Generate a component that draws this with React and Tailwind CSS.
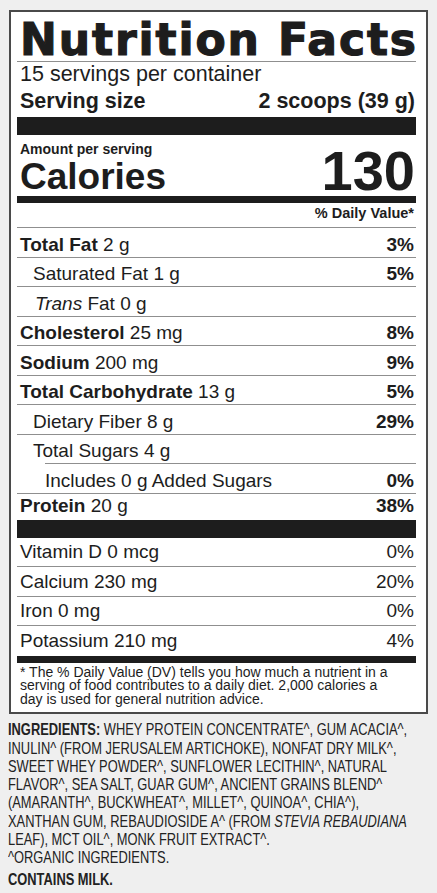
import React from 'react';

function Row({ children, dv, pad = 'pl-[3px]', line = true, align = 'items-end pb-[2px]', dvBold = true, h = 'h-[29.5px]' }) {
  return (
    <div
      className={`flex justify-between ${h} leading-[20px] text-[19px] ${align} ${pad} pr-[2px] ${
        line ? 'border-b border-[#8f8f8f]' : ''
      }`}
    >
      <span className="whitespace-nowrap">{children}</span>
      {dv && <span className={dvBold ? 'font-bold' : ''}>{dv}</span>}
    </div>
  );
}

function App() {
  const ingredients = [
    <>
      <b>INGREDIENTS:</b> WHEY PROTEIN CONCENTRATE^, GUM ACACIA^,
    </>,
    'INULIN^ (FROM JERUSALEM ARTICHOKE), NONFAT DRY MILK^,',
    'SWEET WHEY POWDER^, SUNFLOWER LECITHIN^, NATURAL',
    'FLAVOR^, SEA SALT, GUAR GUM^, ANCIENT GRAINS BLEND^',
    '(AMARANTH^, BUCKWHEAT^, MILLET^, QUINOA^, CHIA^),',
    <>
      XANTHAN GUM, REBAUDIOSIDE A^ (FROM <i>STEVIA REBAUDIANA</i>
    </>,
    'LEAF), MCT OIL^, MONK FRUIT EXTRACT^.',
    '^ORGANIC INGREDIENTS.',
  ];

  return (
    <div className="w-[437px] h-[893px] bg-[#efefef] pt-[10px] text-[#1d1d1d] font-['Liberation_Sans',Arial,sans-serif] overflow-hidden">
      {/* label box */}
      <div className="ml-[9px] w-[419px] border-2 border-[#4a4a4a] bg-white pl-[6px] pr-[10px]">
        <h1 className="h-[50px] border-b border-[#8f8f8f] pl-[3px] pt-[6px] font-['DejaVu_Sans',sans-serif] font-bold text-[44px] leading-[44px] tracking-[1.9px] whitespace-nowrap [-webkit-text-stroke:1.2px_#1d1d1d]">
          Nutrition Facts
        </h1>
        <div className="h-[24px] leading-[24px] text-[21.5px] pl-[3px]">15 servings per container</div>
        <div className="h-[31px] pt-[3px] leading-[24px] text-[21.5px] font-bold flex justify-between pl-[3px] pr-[1px]">
          <span>Serving size</span>
          <span>2 scoops (39 g)</span>
        </div>
        <div className="h-[18px] bg-[#1d1d1d]" />

        <div className="flex justify-between items-end pl-[3px] pr-[1px]">
          <div className="pt-[6px]">
            <div className="h-[16px] leading-[16px] text-[14px] font-bold">Amount per serving</div>
            <div className="h-[39px] leading-[39px] text-[37px] font-bold">Calories</div>
          </div>
          <div className="h-[50px] leading-[50px] text-[56px] font-bold">130</div>
        </div>
        <div className="h-[7px] bg-[#1d1d1d]" />
        <div className="h-[25px] border-b border-[#8f8f8f] text-right text-[14.5px] leading-[20px] font-bold pr-[2px]">
          % Daily Value*
        </div>

        <Row dv="3%">
          <b>Total Fat</b> 2 g
        </Row>
        <Row dv="5%" pad="pl-[16px]">
          Saturated Fat 1 g
        </Row>
        <Row pad="pl-[18px]">
          <i>Trans</i> Fat 0 g
        </Row>
        <Row dv="8%">
          <b>Cholesterol</b> 25 mg
        </Row>
        <Row dv="9%">
          <b>Sodium</b> 200 mg
        </Row>
        <Row dv="5%">
          <b>Total Carbohydrate</b> 13 g
        </Row>
        <Row dv="29%" pad="pl-[16px]">
          Dietary Fiber 8 g
        </Row>
        <Row pad="pl-[16px]" line={false} h="h-[28.5px]">
          Total Sugars 4 g
        </Row>
        <div className="ml-[28px] h-px bg-[#8f8f8f]" />
        <Row dv="0%" pad="pl-[28px]">
          Includes 0 g Added Sugars
        </Row>
        <div className="flex justify-between items-end h-[26px] pb-[4px] leading-[20px] text-[19px] pl-[3px] pr-[2px]">
          <span>
            <b>Protein</b> 20 g
          </span>
          <b>38%</b>
        </div>
        <div className="h-[18px] bg-[#1d1d1d]" />

        <Row dv="0%" dvBold={false} align="items-center pt-[1px]">
          Vitamin D 0 mcg
        </Row>
        <Row dv="20%" dvBold={false} align="items-center pt-[1px]">
          Calcium 230 mg
        </Row>
        <Row dv="0%" dvBold={false} align="items-center pt-[1px]">
          Iron 0 mg
        </Row>
        <Row dv="4%" dvBold={false} line={false} align="items-center pt-[1px]">
          Potassium 210 mg
        </Row>
        <div className="h-[7px] bg-[#1d1d1d]" />
        <div className="pt-[3px] pb-[6px] pl-[3px] text-[14px] leading-[13.6px]">
          <div className="whitespace-nowrap">* The % Daily Value (DV) tells you how much a nutrient in a</div>
          <div className="whitespace-nowrap">serving of food contributes to a daily diet. 2,000 calories a</div>
          <div className="whitespace-nowrap">day is used for general nutrition advice.</div>
        </div>
      </div>

      {/* ingredients */}
      <div className="pl-[8px] pt-[6px] text-[16.5px] leading-[18.3px] text-[#222]">
        {ingredients.map((line, i) => (
          <div key={i} className="whitespace-nowrap origin-left [transform:scaleX(0.78)]">
            {line}
          </div>
        ))}
        <div className="whitespace-nowrap font-bold mt-[3px] origin-left [transform:scaleX(0.78)]">
          CONTAINS MILK.
        </div>
      </div>
    </div>
  );
}

export default App;
